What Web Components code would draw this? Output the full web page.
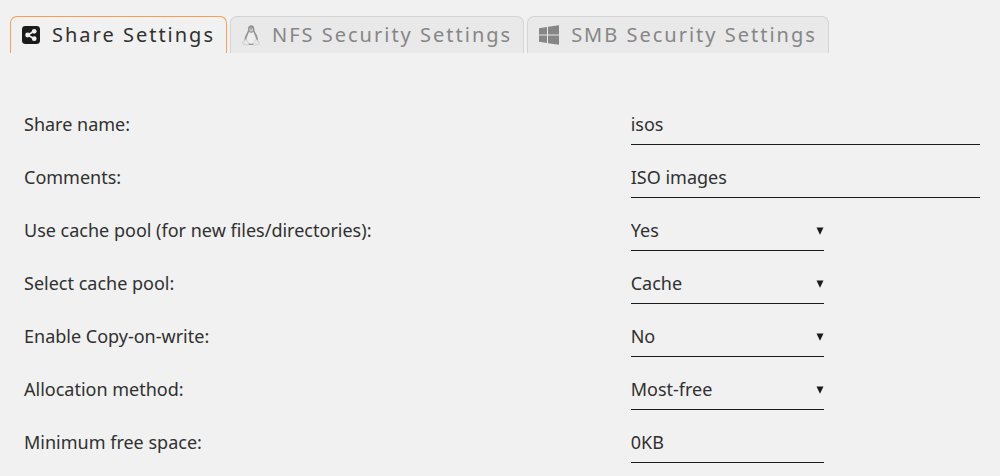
<!DOCTYPE html>
<html lang="en">
<head>
<meta charset="utf-8">
<meta name="viewport" content="width=device-width, initial-scale=1">
<title>Share Settings</title>
<style>
body { margin: 0; background: #f1f1f1; color: #303030; font: 18px/24px "Noto Sans", "Open Sans", sans-serif; }
</style>
</head>
<body>
<share-page></share-page>

<script>
const ICONS = {
  share: `<svg viewBox="0 0 18 18" width="18" height="18" aria-hidden="true"><rect width="18" height="18" rx="3.4" fill="#1c1b1b"/><path d="M12 5.3 5.8 9l6.2 3.7" fill="none" stroke="var(--tab-fill)" stroke-width="1.6"/><g fill="var(--tab-fill)"><circle cx="12.2" cy="5.3" r="2.4"/><circle cx="5.6" cy="9" r="2.4"/><circle cx="12.2" cy="12.7" r="2.4"/></g></svg>`,
  linux: `<svg viewBox="0 0 18 21" width="18" height="21" aria-hidden="true"><path d="M6 4.700C5.900 1.600 7 .2 9.200.2s3.300 1.400 3.200 4.500c0 2.500 3.600 5.300 3.500 9.800-.1 3.100-1.900 5.500-6.700 5.500s-6.700-2.400-6.600-5.500C2.700 10 6 7.200 6 4.700Z" fill="#969696"/><path d="M6.900 6.900 9.200 8l2.300-1.100c.4 2.500 2.500 4.400 2.500 7.800 0 2.700-1.600 4-4.800 4s-4.800-1.400-4.800-4c0-3.300 2.200-5.200 2.500-7.800Z" fill="#eeeeee"/><ellipse cx="9.200" cy="5.600" rx="1.800" ry="1" fill="#cfcfcf"/><circle cx="8" cy="4" r=".7" fill="#dedede"/><circle cx="10.300" cy="4" r=".7" fill="#dedede"/><path d="m.6 16.900 1.600-.5 1.200-1.900c1.700.5 2.700 2.500 3.200 4 .3 1.500-1.300 1.900-2.600 1.300L.8 19c-.5-.5.1-1.200-.2-2.100Zm16.800 0-1.600-.5-1.200-1.900c-1.700.5-2.700 2.500-3.200 4-.3 1.500 1.300 1.900 2.600 1.300l3.200-.8c.5-.5-.1-1.200.2-2.100Z" fill="#e8e8e8" stroke="#c8c8c8" stroke-width=".7"/></svg>`,
  windows: `<svg viewBox="0 0 20 20" width="20" height="20" aria-hidden="true"><path d="M0 3.200 8 2v7.500H0ZM9 1.800 20 .2v9.300H9ZM0 10.500h8V18l-8-1.200ZM9 10.500h11v9.300L9 18.200Z" fill="currentColor"/></svg>`
};

customElements.define('tab-item', class extends HTMLElement {
  connectedCallback() {
    const active = this.hasAttribute('active');
    this.attachShadow({ mode: 'open' }).innerHTML = `
      <style>
        :host { display: block; --tab-fill: #e9e9e9; --tab-edge: #d4d4d4; color: #868686; }
        :host([active]) { --tab-fill: #f1f1f1; --tab-edge: #ff9e50; color: #303030; }
        button { box-sizing: border-box; display: flex; align-items: center; gap: 12px; height: 37px; margin: 0; padding: 0 11px;
          border: 1px solid var(--tab-edge); border-bottom: 0; border-radius: 7px 7px 0 0; background: var(--tab-fill);
          color: inherit; font: inherit; font-size: 20px; letter-spacing: 2px; white-space: nowrap; cursor: pointer; }
        svg { flex: none; display: block; }
      </style>
      <button type="button" role="tab" aria-selected="${active}">${ICONS[this.getAttribute('icon')]}<slot></slot></button>`;
  }
});

customElements.define('tab-bar', class extends HTMLElement {
  connectedCallback() {
    this.setAttribute('role', 'tablist');
    this.attachShadow({ mode: 'open' }).innerHTML = `
      <style>:host { display: flex; gap: 3px; padding: 16px 10px 0; }</style>
      <slot></slot>`;
  }
});

customElements.define('setting-row', class extends HTMLElement {
  connectedCallback() {
    const value = this.getAttribute('value');
    const kind = this.getAttribute('kind');
    const control = kind === 'select'
      ? `<div class="pick short"><select id="control">${this.getAttribute('options').split(',').map(o => `<option${o === value ? ' selected' : ''}>${o}</option>`).join('')}</select><svg viewBox="0 0 8 8" width="8" height="8" aria-hidden="true"><path d="M.5.500h7L4 7.800Z" fill="#1c1b1b"/></svg></div>`
      : `<input id="control" type="text" class="${kind}" value="${value}">`;
    this.attachShadow({ mode: 'open' }).innerHTML = `
      <style>
        :host { display: grid; grid-template-columns: 33fr 19fr; align-items: start; height: 53px; }
        label { padding-top: 8px; }
        input, select { box-sizing: border-box; display: block; width: 100%; height: 41px; margin: 0; padding: 0 0 1px; border: 0;
          border-bottom: 1px solid #1c1b1b; border-radius: 0; outline: 0; background: transparent;
          color: inherit; font: inherit; appearance: none; }
        .short { width: 193px; max-width: 100%; }
        .pick { display: grid; align-items: center; }
        .pick > * { grid-area: 1 / 1; }
        .pick svg { justify-self: end; pointer-events: none; }
      </style>
      <label for="control">${this.getAttribute('label')}</label>
      ${control}`;
  }
});

customElements.define('share-page', class extends HTMLElement {
  connectedCallback() {
    this.attachShadow({ mode: 'open' }).innerHTML = `
      <style>
        :host { display: block; }
        form { padding: 51px 20px 0 24px; }
      </style>
      <tab-bar>
        <tab-item icon="share" active>Share Settings</tab-item>
        <tab-item icon="linux">NFS Security Settings</tab-item>
        <tab-item icon="windows">SMB Security Settings</tab-item>
      </tab-bar>
      <form>
        <setting-row label="Share name:" kind="long" value="isos"></setting-row>
        <setting-row label="Comments:" kind="long" value="ISO images"></setting-row>
        <setting-row label="Use cache pool (for new files/directories):" kind="select" value="Yes" options="No,Yes,Only,Prefer"></setting-row>
        <setting-row label="Select cache pool:" kind="select" value="Cache" options="Cache"></setting-row>
        <setting-row label="Enable Copy-on-write:" kind="select" value="No" options="Auto,No"></setting-row>
        <setting-row label="Allocation method:" kind="select" value="Most-free" options="High-water,Fill-up,Most-free"></setting-row>
        <setting-row label="Minimum free space:" kind="short" value="0KB"></setting-row>
      </form>`;
  }
});
</script>
</body>
</html>
